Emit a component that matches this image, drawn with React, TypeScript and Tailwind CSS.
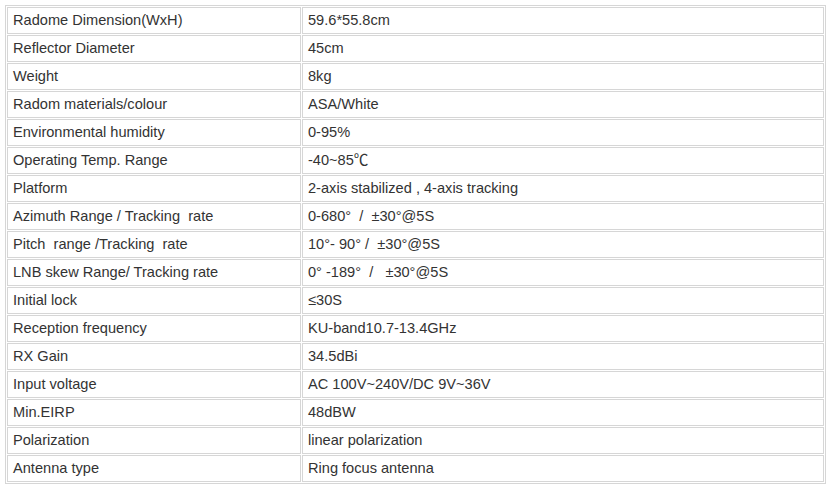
import React from "react";

// spec rows, spacing kept as in the source page
const specs: [string, string][] = [
  ["Radome Dimension(WxH)", "59.6*55.8cm"],
  ["Reflector Diameter", "45cm"],
  ["Weight", "8kg"],
  ["Radom materials/colour", "ASA/White"],
  ["Environmental humidity", "0-95%"],
  ["Operating Temp. Range", "-40~85℃"],
  ["Platform", "2-axis stabilized , 4-axis tracking"],
  ["Azimuth Range / Tracking  rate", "0-680°  /  ±30°@5S"],
  ["Pitch  range /Tracking  rate", "10°- 90° /  ±30°@5S"],
  ["LNB skew Range/ Tracking rate", "0° -189°  /   ±30°@5S"],
  ["Initial lock", "≤30S"],
  ["Reception frequency", "KU-band10.7-13.4GHz"],
  ["RX Gain", "34.5dBi"],
  ["Input voltage", "AC 100V~240V/DC 9V~36V"],
  ["Min.EIRP", "48dBW"],
  ["Polarization", "linear polarization"],
  ["Antenna type", "Ring focus antenna"],
];

export default function App() {
  return (
    <div className="w-[835px] h-[491px] bg-white pt-[5px] pl-[5px]">
      <table
        className="w-[821px] border-separate border-spacing-[1px] border border-[#d6d6d6] text-[14.6px] text-[#333333]"
        style={{ fontFamily: '"Liberation Sans", Arial, "Noto Sans CJK SC", sans-serif' }}
      >
        <tbody>
          {specs.map(([label, value], i) => (
            <tr key={i}>
              <td className="w-[294px] h-[27px] border border-[#d6d6d6] pl-[5px] pr-[5px] pt-[1px] pb-0 whitespace-pre align-middle">
                {label}
              </td>
              <td className="h-[27px] border border-[#d6d6d6] pl-[5px] pr-[5px] pt-[1px] pb-0 whitespace-pre align-middle">
                {value}
              </td>
            </tr>
          ))}
        </tbody>
      </table>
    </div>
  );
}
